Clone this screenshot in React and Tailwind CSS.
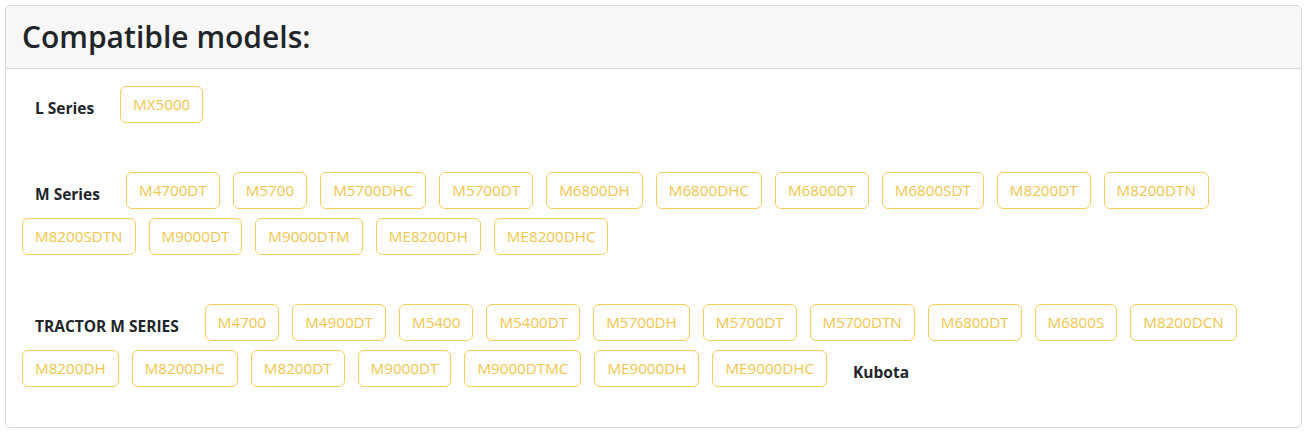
import React from 'react';

// Model groups shown in the card
const groups = [
    { name: 'L Series', models: ['MX5000'] },
    {
        name: 'M Series',
        models: [
            'M4700DT', 'M5700', 'M5700DHC', 'M5700DT', 'M6800DH', 'M6800DHC', 'M6800DT',
            'M6800SDT', 'M8200DT', 'M8200DTN', 'M8200SDTN', 'M9000DT', 'M9000DTM',
            'ME8200DH', 'ME8200DHC'
        ]
    },
    {
        name: 'TRACTOR M SERIES',
        models: [
            'M4700', 'M4900DT', 'M5400', 'M5400DT', 'M5700DH', 'M5700DT', 'M5700DTN',
            'M6800DT', 'M6800S', 'M8200DCN', 'M8200DH', 'M8200DHC', 'M8200DT', 'M9000DT',
            'M9000DTMC', 'ME9000DH', 'ME9000DHC'
        ],
        trailing: 'Kubota'
    }
];

const Label = ({ children }) => (
    <span className="pl-[13px] pr-[13px] mt-2 text-[15.5px] font-bold text-[#212529]">{children}</span>
);

const ModelButton = ({ name }) => (
    <button
        type="button"
        className="h-[37px] px-3 rounded-[6px] border border-[#f4cf5c] bg-white text-[15.2px] text-[#f2c64e] leading-none"
    >
        {name}
    </button>
);

const App = () => {
    return (
        <div className="bg-white w-[1307px] h-[433px] p-[5px]" style={{ fontFamily: '"Open Sans", "Noto Sans", sans-serif' }}>
            <div className="border border-[#d9d9d9] rounded-[5px] h-[423px] overflow-hidden">
                {/* Header */}
                <div className="h-[63px] bg-[#f7f7f7] border-b border-[#d6d6d6] flex items-center px-4">
                    <h2 className="text-[30px] font-semibold text-[#212529] leading-none">Compatible models:</h2>
                </div>

                {/* Body */}
                <div className="pt-[17px] px-4 flex flex-col gap-[49px]">
                    {groups.map((group) => (
                        <div key={group.name} className="flex flex-wrap items-center gap-x-[13px] gap-y-[9px]">
                            <Label>{group.name}</Label>
                            {group.models.map((m) => (
                                <ModelButton key={m} name={m} />
                            ))}
                            {group.trailing && <Label>{group.trailing}</Label>}
                        </div>
                    ))}
                </div>
            </div>
        </div>
    );
};

export default App;
